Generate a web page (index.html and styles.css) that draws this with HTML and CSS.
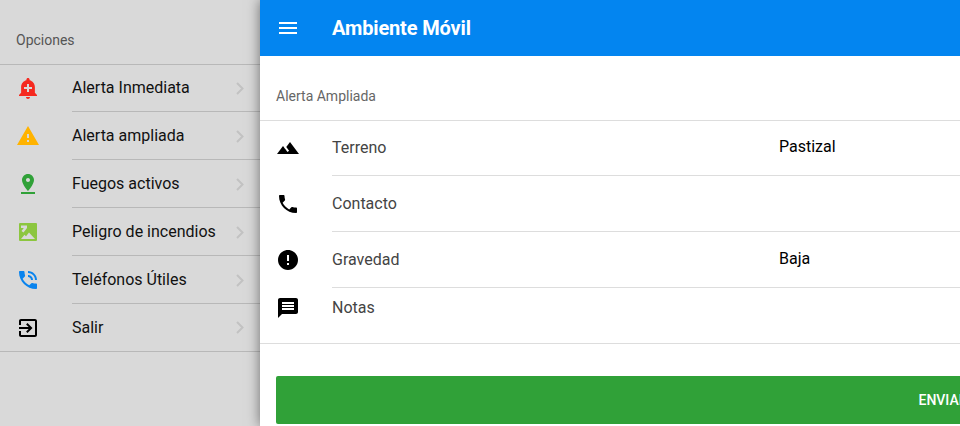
FILE: index.html
```html
<!DOCTYPE html>
<html lang="es">
<head>
    <meta charset="UTF-8">
    <meta name="viewport" content="width=device-width, initial-scale=1.0">
    <title>Ambiente Móvil</title>
    <link rel="stylesheet" href="styles.css">
</head>
<body>
    <div class="app">
        <!-- menu lateral -->
        <nav class="side-menu">
            <div class="side-title">Opciones</div>
            <ul class="side-list">
                <li class="side-item">
                    <svg class="icon icon-red" viewBox="0 0 24 24"><path d="M10.01 21.01c0 1.1.89 1.99 1.99 1.99s1.99-.89 1.99-1.99h-3.98zm8.87-4.19V11c0-3.25-2.25-5.97-5.29-6.69v-.72C13.59 2.71 12.88 2 12 2s-1.59.71-1.59 1.59v.72C7.37 5.03 5.12 7.75 5.12 11v5.82L3 18.94V20h18v-1.06l-2.12-2.12zM16 13.01h-3v3h-2v-3H8V11h3V8h2v3h3v2.01z"/></svg>
                    <span class="side-label">Alerta Inmediata</span>
                    <svg class="chevron" viewBox="0 0 8 13"><path d="M1 1l5.5 5.5L1 12"/></svg>
                </li>
                <li class="side-item">
                    <svg class="icon icon-amber" viewBox="0 0 24 24"><path d="M1 21h22L12 2 1 21zm12-3h-2v-2h2v2zm0-4h-2v-4h2v4z"/></svg>
                    <span class="side-label">Alerta ampliada</span>
                    <svg class="chevron" viewBox="0 0 8 13"><path d="M1 1l5.5 5.5L1 12"/></svg>
                </li>
                <li class="side-item">
                    <svg class="icon icon-green" viewBox="0 0 24 24"><path d="M18 8c0-3.31-2.69-6-6-6S6 4.69 6 8c0 4.5 6 11 6 11s6-6.5 6-11zm-8 0c0-1.1.9-2 2-2s2 .9 2 2-.89 2-2 2c-1.1 0-2-.9-2-2zM5 20v2h14v-2H5z"/></svg>
                    <span class="side-label">Fuegos activos</span>
                    <svg class="chevron" viewBox="0 0 8 13"><path d="M1 1l5.5 5.5L1 12"/></svg>
                </li>
                <li class="side-item">
                    <svg class="icon icon-lime" viewBox="0 0 24 24"><path fill-rule="evenodd" d="M4 3h16a1 1 0 0 1 1 1v16a1 1 0 0 1-1 1H4a1 1 0 0 1-1-1V4a1 1 0 0 1 1-1zM5 5.500h6v2.500L7.500 12.500 5.500 11 7.800 8H5zM5 19l3.500-4.200 1.500 1.500L13 12.500 19 19z"/></svg>
                    <span class="side-label">Peligro de incendios</span>
                    <svg class="chevron" viewBox="0 0 8 13"><path d="M1 1l5.5 5.5L1 12"/></svg>
                </li>
                <li class="side-item">
                    <svg class="icon icon-blue" viewBox="0 0 24 24"><path d="M20 15.5c-1.25 0-2.45-.2-3.57-.57-.35-.11-.74-.03-1.02.24l-2.2 2.2c-2.83-1.44-5.15-3.75-6.59-6.59l2.2-2.21c.28-.26.36-.65.25-1C8.7 6.45 8.5 5.25 8.5 4c0-.55-.45-1-1-1H4c-.55 0-1 .45-1 1 0 9.39 7.61 17 17 17 .55 0 1-.45 1-1v-3.500c0-.55-.45-1-1-1zM19 12h2c0-4.97-4.03-9-9-9v2c3.87 0 7 3.13 7 7zm-4 0h2c0-2.76-2.24-5-5-5v2c1.66 0 3 1.34 3 3z"/></svg>
                    <span class="side-label">Teléfonos Útiles</span>
                    <svg class="chevron" viewBox="0 0 8 13"><path d="M1 1l5.5 5.5L1 12"/></svg>
                </li>
                <li class="side-item side-item-last">
                    <svg class="icon" viewBox="0 0 24 24"><path d="M10.09 15.59L11.5 17l5-5-5-5-1.41 1.41L12.67 11H3v2h9.67l-2.58 2.59zM19 3H5c-1.11 0-2 .9-2 2v4h2V5h14v14H5v-4H3v4c0 1.1.89 2 2 2h14c1.1 0 2-.9 2-2V5c0-1.1-.9-2-2-2z"/></svg>
                    <span class="side-label">Salir</span>
                    <svg class="chevron" viewBox="0 0 8 13"><path d="M1 1l5.5 5.5L1 12"/></svg>
                </li>
            </ul>
        </nav>

        <!-- panel principal -->
        <main class="panel">
            <header class="toolbar">
                <svg class="icon icon-white" viewBox="0 0 24 24"><path d="M3 18h18v-2H3v2zm0-5h18v-2H3v2zm0-7v2h18V6H3z"/></svg>
                <h1 class="toolbar-title">Ambiente Móvil</h1>
            </header>

            <div class="form-title">Alerta Ampliada</div>

            <div class="form-list">
                <div class="form-row">
                    <svg class="icon" viewBox="0 0 24 24"><path d="M14 6l-3.750 5 2.850 3.800-1.600 1.200C9.810 13.750 7 10 7 10l-6 8h22L14 6z"/></svg>
                    <div class="form-field">
                        <span class="form-label">Terreno</span>
                        <span class="form-value">Pastizal</span>
                    </div>
                </div>
                <div class="form-row">
                    <svg class="icon" viewBox="0 0 24 24"><path d="M6.620 10.790c1.440 2.830 3.760 5.140 6.590 6.590l2.200-2.200c.27-.27.67-.36 1.020-.24 1.120.37 2.330.57 3.570.57.55 0 1 .45 1 1V20c0 .55-.45 1-1 1-9.390 0-17-7.610-17-17 0-.55.45-1 1-1h3.500c.55 0 1 .45 1 1 0 1.250.2 2.450.57 3.570.11.35.03.74-.25 1.020l-2.200 2.200z"/></svg>
                    <div class="form-field">
                        <span class="form-label">Contacto</span>
                    </div>
                </div>
                <div class="form-row">
                    <svg class="icon" viewBox="0 0 24 24"><path d="M12 2C6.480 2 2 6.480 2 12s4.480 10 10 10 10-4.480 10-10S17.520 2 12 2zm1 15h-2v-2h2v2zm0-4h-2V7h2v6z"/></svg>
                    <div class="form-field">
                        <span class="form-label">Gravedad</span>
                        <span class="form-value">Baja</span>
                    </div>
                </div>
                <div class="form-row form-row-notes">
                    <svg class="icon" viewBox="0 0 24 24"><path d="M20 2H4c-1.100 0-1.990.9-1.990 2L2 22l4-4h14c1.100 0 2-.9 2-2V4c0-1.100-.9-2-2-2zm-2 12H6v-2h12v2zm0-3H6V9h12v2zm0-3H6V6h12v2z"/></svg>
                    <div class="form-field">
                        <span class="form-label">Notas</span>
                    </div>
                </div>
            </div>

            <button class="send-btn">ENVIAR</button>
        </main>
    </div>
</body>
</html>
```

FILE: styles.css
```css
html, body {
    margin: 0;
    height: 100%;
    overflow: hidden;
}
body {
    font-family: Roboto, "Liberation Sans", sans-serif;
    background-color: #d9d9d9;
}
.app {
    display: flex;
    height: 426px;
}
.icon {
    width: 24px;
    height: 24px;
    flex: none;
    fill: #000;
}
.icon-red { fill: #f5291f; }
.icon-amber { fill: #ffb300; }
.icon-green { fill: #30a138; }
.icon-lime { fill: #8cc63f; }
.icon-blue { fill: #0a84ee; }
.icon-white { fill: #fff; }

/* menu lateral */
.side-menu {
    width: 260px;
    flex: none;
}
.side-title {
    height: 65px;
    box-sizing: border-box;
    padding-top: 33px;
    padding-left: 16px;
    font-size: 14px;
    line-height: 15px;
    color: #555;
    border-bottom: 1px solid #b8b8b8;
}
.side-list {
    list-style: none;
    margin: -1px 0 0;
    padding: 0;
    border-bottom: 1px solid #b8b8b8;
}
.side-item {
    display: flex;
    align-items: center;
    height: 48px;
    padding-left: 16px;
}
.side-item-last {
    height: 47px;
}
.side-label {
    flex: 1;
    align-self: stretch;
    display: flex;
    align-items: center;
    margin-left: 32px;
    font-size: 16px;
    color: #111;
    box-sizing: border-box;
    border-bottom: 1px solid #b8b8b8;
}
.side-item-last .side-label {
    border-bottom: none;
}
.chevron {
    width: 8px;
    height: 13px;
    flex: none;
    margin-left: -24px;
    margin-right: 16px;
    fill: none;
    stroke: #c2c2c2;
    stroke-width: 2;
}

/* panel */
.panel {
    width: 1368px;
    flex: none;
    background-color: #fff;
    box-shadow: 0 0 12px rgba(0,0,0,0.5);
}
.toolbar {
    display: flex;
    align-items: center;
    height: 56px;
    padding-left: 16px;
    background-color: #0385f0;
    color: #fff;
}
.toolbar-title {
    margin: 0 0 0 32px;
    font-size: 20px;
    font-weight: 700;
    letter-spacing: -0.15px;
}
.form-title {
    height: 65px;
    box-sizing: border-box;
    padding-top: 33px;
    padding-left: 16px;
    font-size: 14px;
    line-height: 15px;
    color: #666;
    border-bottom: 1px solid #ddd;
}
.form-list {
    margin-top: -1px;
    border-bottom: 1px solid #ddd;
}
.form-row {
    display: flex;
    height: 56px;
    padding-left: 16px;
}
.form-row .icon {
    margin-top: 16px;
}
.form-field {
    flex: 1;
    display: flex;
    align-items: center;
    margin-left: 32px;
    box-sizing: border-box;
    border-bottom: 1px solid #ddd;
    font-size: 16px;
    color: #444;
}
.form-label {
    width: 447px;
}
.form-value {
    margin-bottom: 2px;
    color: #000;
}
.form-row-notes {
    height: 55px;
}
.form-row-notes .icon {
    margin-top: 8px;
}
.form-row-notes .form-field {
    align-items: flex-start;
    padding-top: 10px;
    border-bottom: none;
}
.send-btn {
    display: block;
    width: 1334px;
    height: 48px;
    margin: 32px 16px 0;
    border: none;
    border-radius: 2px;
    background-color: #30a138;
    color: #fff;
    font-family: inherit;
    font-size: 14px;
    font-weight: 500;
}
```
